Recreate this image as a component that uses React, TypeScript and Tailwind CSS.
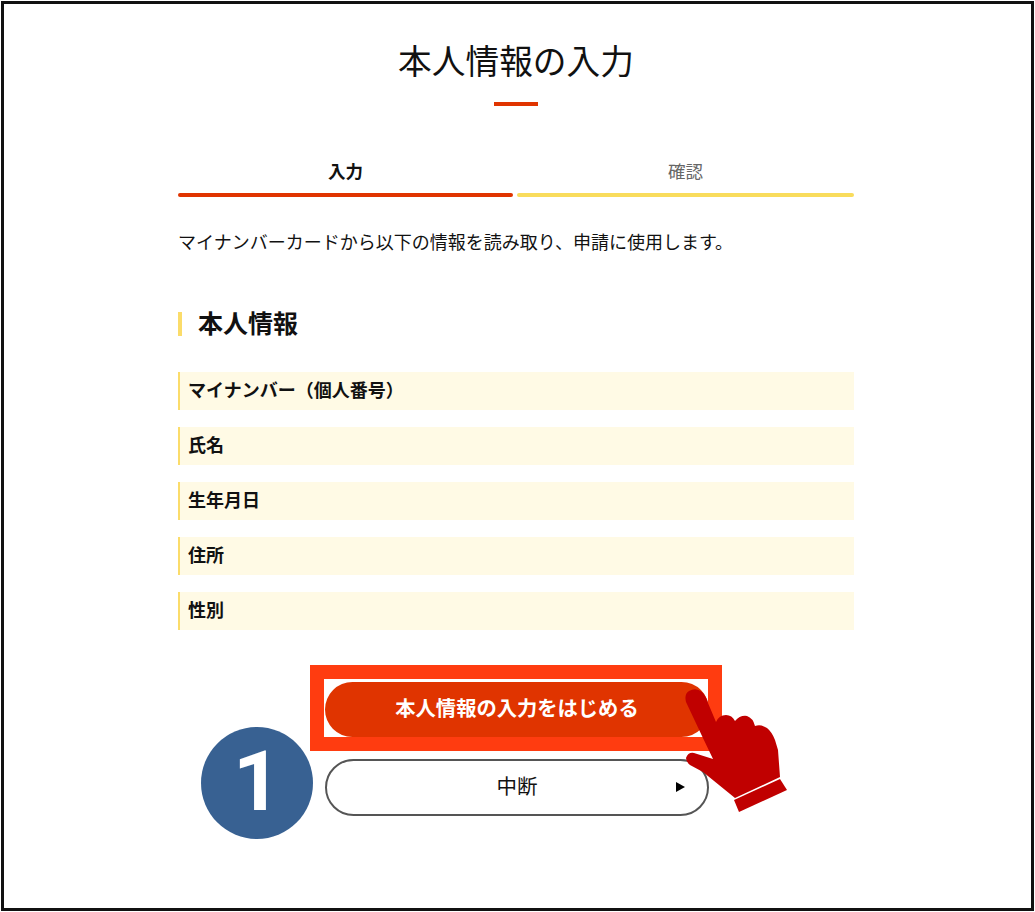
const rows = ["マイナンバー（個人番号）", "氏名", "生年月日", "住所", "性別"];

function Hand() {
  return (
    <svg className="absolute left-[670px] top-[680px] w-[130px] h-[140px]" viewBox="0 0 130 140" fill="#c00000">
      <path d="M16 22 Q14 14 19 11 Q26 7 32 12 Q36 16 38 23 L46 42 Q49 35 56 35 Q62 35 65 41 Q70 35 77 36 Q83 38 85 46 Q91 44 97 48 Q102 52 105 60 L108 70 L110 97 L65 118 L33 92 L20 85 Q16 82 16 78 Q18 72 24 73 L43 79 L32 56 Z" />
      <path d="M110 99 L117 110 L69 132 L64 120 Z" />
    </svg>
  );
}

export default function App() {
  return (
    <div className="relative w-[1035px] h-[912px] bg-white p-px font-['Noto_Sans_CJK_JP','Noto_Sans',sans-serif] text-[#111]">
      <div className="h-full border-[3px] border-[#111] pt-[31px] pl-[174px]">
        <div className="w-[676px]">
          <h1 className="text-center text-[33.7px] leading-[50px] font-normal">本人情報の入力</h1>
          <div className="mx-auto mt-[17px] h-[4px] w-[44px] bg-[#e03400]" />

          <div className="mt-[52px] flex gap-[4px]">
            <div className="w-[335px] text-center text-[17.5px] leading-[26px] font-bold">
              入力
              <div className="mt-[9px] h-[4px] rounded-full bg-[#e03400]" />
            </div>
            <div className="flex-1 text-center text-[17.5px] leading-[26px] text-[#666]">
              確認
              <div className="mt-[9px] h-[4px] rounded-full bg-[#f9dc5c]" />
            </div>
          </div>

          <p className="mt-[30px] text-[18px] leading-[28px] whitespace-nowrap">マイナンバーカードから以下の情報を読み取り、申請に使用します。</p>

          <h2 className="mt-[53px] flex items-end gap-[16px] text-[25px] leading-[28px] font-bold">
            <span className="h-[24px] w-[4px] bg-[#fbdc6a]" />
            本人情報
          </h2>

          <div className="mt-[36px] flex flex-col gap-[17.5px]">
            {rows.map((r) => (
              <div key={r} className="h-[37.5px] flex items-center border-l-2 border-[#fbdc6a] bg-[#fffae5] pb-[2px] pl-[8px] text-[18px] font-bold">
                {r}
              </div>
            ))}
          </div>

          <div className="mt-[52px] ml-[147px] flex w-[384px] flex-col gap-[22px]">
            <button className="h-[55px] rounded-full bg-[#e03400] pb-[4px] text-[20.3px] font-bold text-white">本人情報の入力をはじめる</button>
            <button className="grid h-[57px] grid-cols-[1fr_auto_1fr] items-center rounded-full border-2 border-[#555] bg-white text-[20.5px]">
              <span />
              <span className="pb-[4px]">中断</span>
              <span className="mr-[22px] h-0 w-0 justify-self-end border-y-[5.5px] border-l-[9px] border-y-transparent border-l-black" />
            </button>
          </div>
        </div>
      </div>

      <div className="absolute left-[310px] top-[665px] h-[86px] w-[412px] border-[14px] border-[#ff3c10]" />
      <div className="absolute left-[201px] top-[727px] flex h-[112px] w-[112px] items-center justify-center rounded-full bg-[#386192] pb-[2px] font-['Roboto',sans-serif] text-[84px] font-bold text-white">1</div>
      <Hand />
    </div>
  );
}
